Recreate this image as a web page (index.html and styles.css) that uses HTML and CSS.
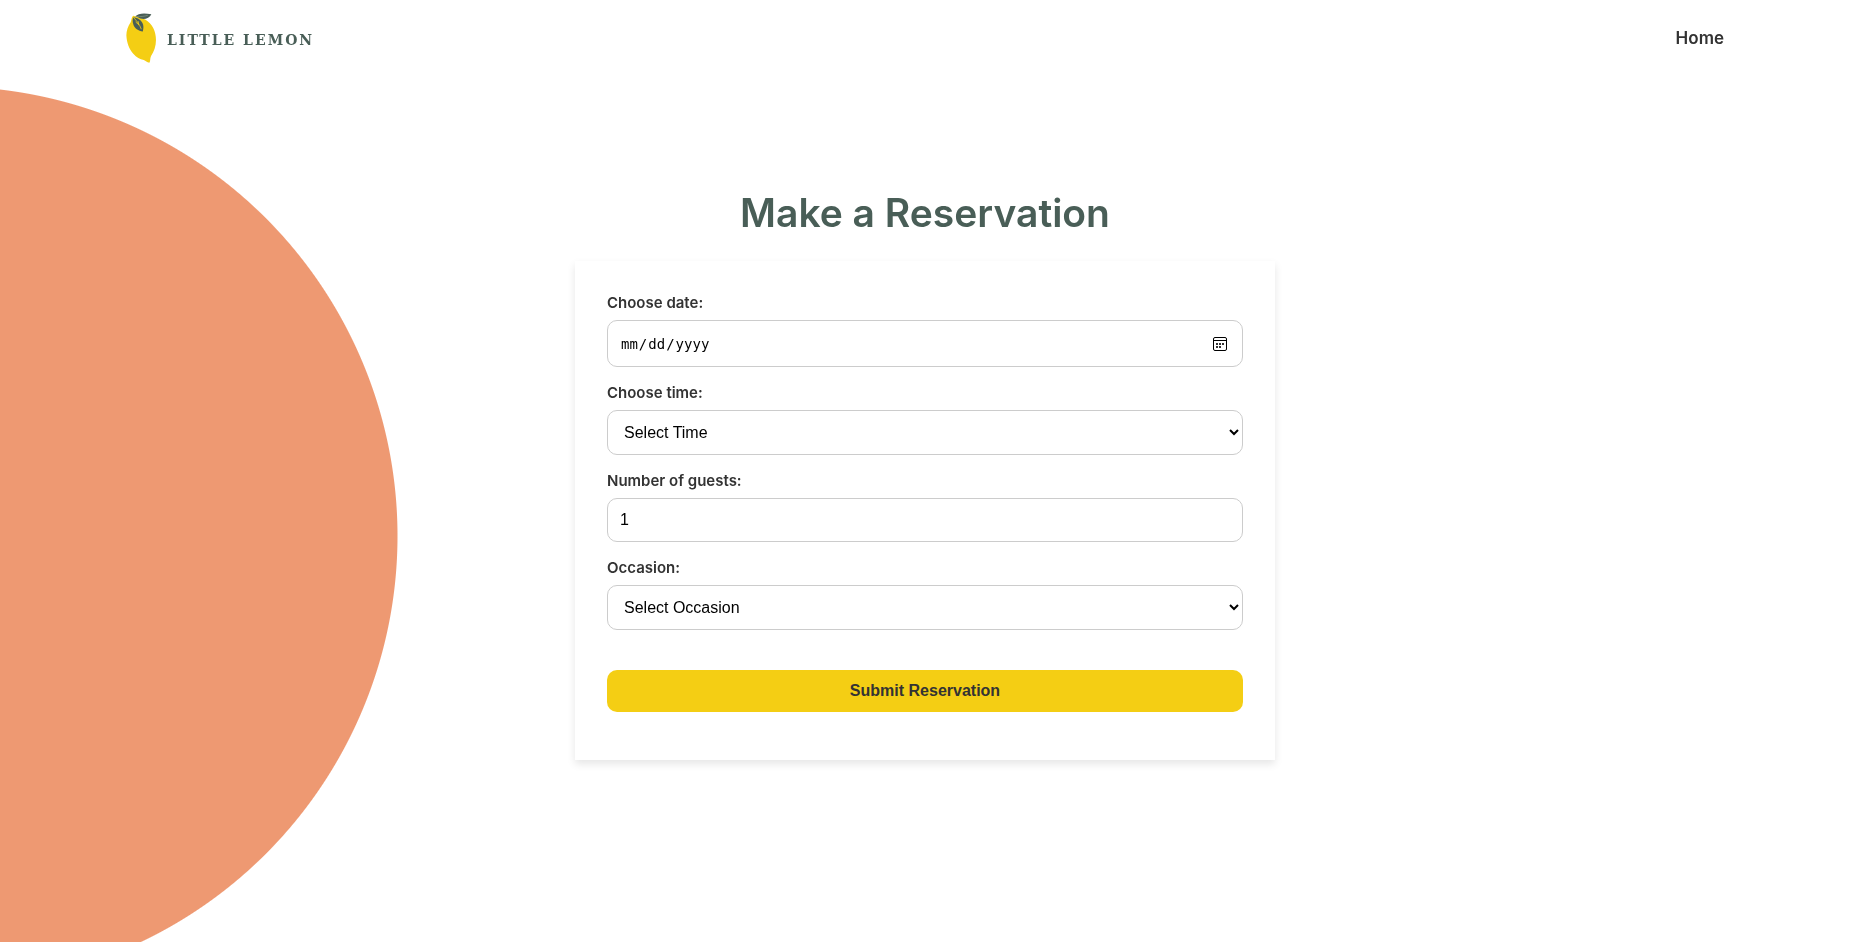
FILE: index.html
```html
<!DOCTYPE html>
<html lang="en">
<head>
<meta charset="utf-8">
<meta name="viewport" content="width=device-width, initial-scale=1">
<title>Little Lemon - Reservation</title>
<link rel="stylesheet" href="styles.css">
</head>
<body>
<div class="backdrop" aria-hidden="true"></div>
<header class="header">
  <a class="brand" href="#">
    <svg class="brand-mark" viewBox="15 14 92 152" aria-hidden="true">
      <path fill="#f4ce14" d="M36 22 C30 27 31 34 28 42 C20 54 15 68 15 82 C16 106 24 124 36 138 C46 149 56 155 68 157 C74 159 77 165 85 165 C89 160 86 154 90 145 C99 131 105 115 105 96 C105 70 94 46 72 34 C62 29 50 27 36 22 Z"/>
      <path fill="#495e57" d="M36 28 C50 28 62 36 66 50 C68 58 66 65 65 70 C52 69 39 60 36 48 C33 40 34 33 36 28 Z"/>
      <path fill="#495e57" d="M42 25 C50 15 68 14 91 18 C86 30 70 35 58 31 C52 29 47 26 42 25 Z"/>
      <path fill="none" stroke="#f4ce14" stroke-width="2.4" stroke-linecap="round" d="M38 29 C46 38 55 48 60 62 M51 40 L52 50 M44 42 L51 48"/>
      <path fill="none" stroke="#9bab92" stroke-width="1.6" d="M46 25 C57 26 70 24 80 21"/>
    </svg>
    <span class="brand-name">LITTLE LEMON</span>
  </a>
  <nav><a class="nav-link" href="#">Home</a></nav>
</header>
<main class="main">
  <h1 class="title">Make a Reservation</h1>
  <form class="card">
    <div class="field">
      <label for="date">Choose date:</label>
      <input class="control control-date" type="date" id="date">
    </div>
    <div class="field">
      <label for="time">Choose time:</label>
      <select class="control control-select" id="time"><option>Select Time</option></select>
    </div>
    <div class="field">
      <label for="guests">Number of guests:</label>
      <input class="control" type="number" id="guests" min="1" max="10" value="1">
    </div>
    <div class="field">
      <label for="occasion">Occasion:</label>
      <select class="control control-select" id="occasion"><option>Select Occasion</option></select>
    </div>
    <button class="submit" type="button">Submit Reservation</button>
  </form>
</main>
</body>
</html>
```
FILE: styles.css
```css
* {
  box-sizing: border-box;
}

body {
  margin: 0;
  min-height: 100vh;
  background: #fff;
  color: #333;
  font-family: Inter, "Liberation Sans", sans-serif;
  font-size: 16px;
}

.backdrop {
  position: fixed;
  inset: 0;
  z-index: -1;
  background: radial-gradient(circle at -52px 536px, #ee9972 449px, transparent 450px);
}

.header {
  display: flex;
  align-items: center;
  justify-content: space-between;
  height: 76px;
  padding: 0 126px;
}

.brand {
  display: flex;
  align-items: center;
  gap: 10px;
  color: #495e57;
  text-decoration: none;
}

.brand-mark {
  width: 31px;
  height: 50px;
}

.brand-name {
  padding-top: 4px;
  font-family: "DejaVu Serif", serif;
  font-size: 14px;
  font-weight: 700;
  letter-spacing: 2px;
}

.nav-link {
  color: #333;
  font-size: 17px;
  font-weight: 600;
  text-decoration: none;
}

.main {
  display: flex;
  flex-direction: column;
  align-items: center;
  gap: 24px;
  padding: 113px 16px 48px;
}

.title {
  margin: 0;
  color: #495e57;
  font-size: 39px;
  font-weight: 600;
  line-height: 48px;
}

.card {
  display: flex;
  flex-direction: column;
  gap: 16px;
  width: 100%;
  max-width: 700px;
  padding: 32px 32px 48px;
  background: #fff;
  box-shadow: 0 4px 8px rgba(0, 0, 0, 0.1);
}

.field {
  display: flex;
  flex-direction: column;
  gap: 8px;
}

.field label {
  font-size: 15px;
  font-weight: 600;
  line-height: 19px;
}

.control {
  width: 100%;
  height: 44px;
  margin: 0;
  padding: 12px;
  border: 1px solid #ccc;
  border-radius: 10px;
  background: #fff;
  color: #000;
  font-family: "Liberation Sans", Arial, sans-serif;
  font-size: 16px;
}

.control-select {
  height: 45px;
}

.control-date {
  height: 47px;
}

.control-date::-webkit-datetime-edit {
  font-family: "DejaVu Sans Mono", monospace;
  font-size: 14px;
}

.control-date::-webkit-calendar-picker-indicator {
  width: 14px;
  height: 14px;
  padding: 3px;
  box-sizing: content-box;
  background: url("data:image/svg+xml,%3Csvg xmlns='http://www.w3.org/2000/svg' viewBox='0 0 14 14'%3E%3Crect x='.5' y='.5' width='13' height='13' rx='1.5' fill='none' stroke='%23000'/%3E%3Cpath d='M1 3.5h12' stroke='%23000'/%3E%3Cpath d='M3 6h2v2H3zM6 6h2v2H6zM9 6h2v2H9zM3 9h2v2H3zM6 9h2v2H6z' fill='%23333'/%3E%3C/svg%3E") center / 14px 14px no-repeat;
}

.submit {
  height: 42px;
  margin-top: 24px;
  padding: 0 16px;
  border: 0;
  border-radius: 10px;
  background: #f4ce14;
  color: #333;
  font-family: "Liberation Sans", Arial, sans-serif;
  font-size: 16px;
  font-weight: 700;
}
```
